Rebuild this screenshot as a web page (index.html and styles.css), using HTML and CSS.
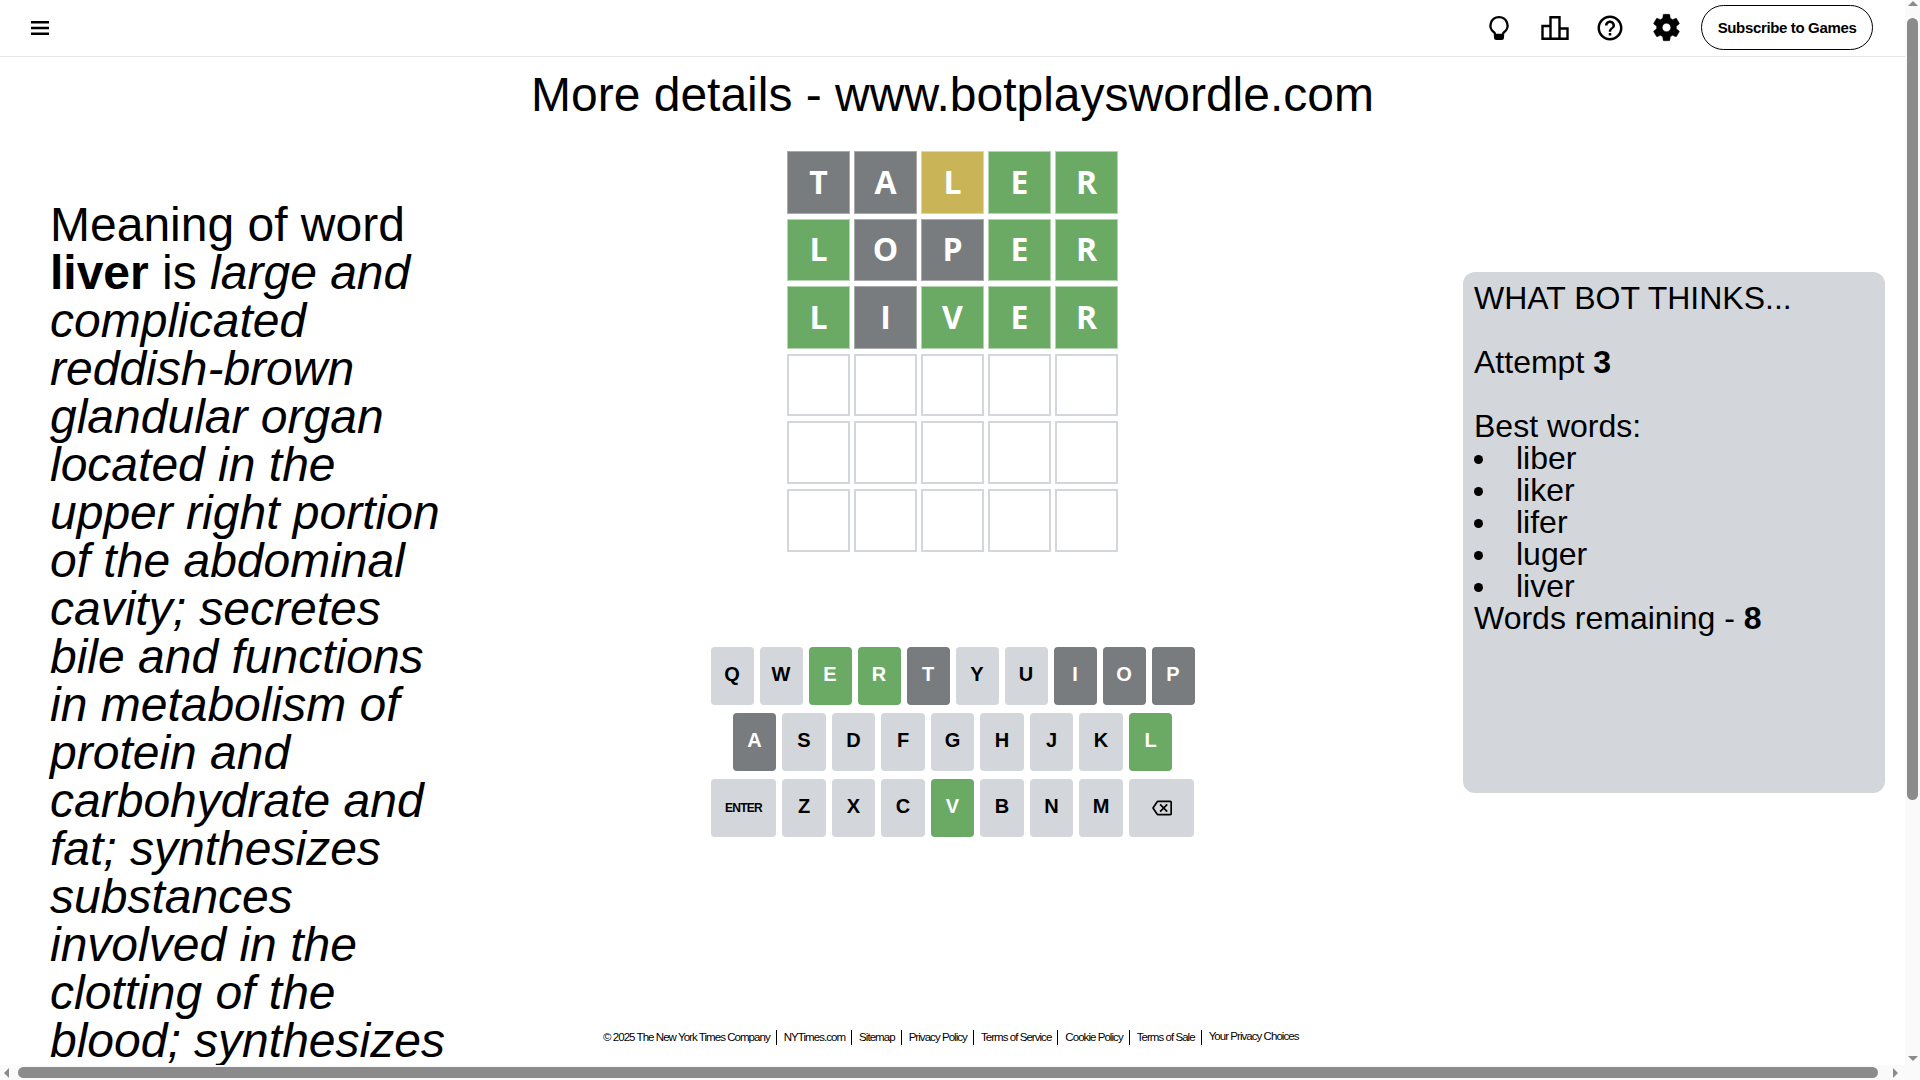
FILE: index.html
```html
<!DOCTYPE html>
<html lang="en">
<head>
<meta charset="utf-8">
<title>Wordle</title>
<link rel="stylesheet" href="styles.css">
</head>
<body>
<header class="topbar">
  <button class="icon-btn menu" aria-label="Menu">
    <svg width="24" height="24" viewBox="0 0 24 24"><path d="M3 5h18v2.600H3zM3 10.700h18v2.600H3zM3 16.400h18V19H3z"/></svg>
  </button>
  <div class="top-actions">
    <svg class="ic bulb" width="24" height="28" viewBox="0 0 24 28"><path d="M12 3.100a8.400 8.400 0 0 0-5 15.200c.7.500 1 1.200 1 2v.7h8v-.7c0-.8.300-1.500 1-2a8.400 8.400 0 0 0-5-15.200z" fill="none" stroke="#000" stroke-width="2.300"/><path d="M7 20h10v3.500a2.500 2.500 0 0 1-2.500 2.500h-5A2.500 2.500 0 0 1 7 23.500z"/></svg>
    <svg class="ic bars" width="28" height="24" viewBox="0 0 28 24"><path d="M1.500 22.800V10h8V1.300h9V12.500h8v10.300z M9.500 10v12.800 M18.500 12.500v10.300" fill="none" stroke="#000" stroke-width="2.400"/></svg>
    <svg class="ic help" width="30" height="30" viewBox="0 0 24 24"><path d="M11 18h2v-2h-2v2zm1-16C6.480 2 2 6.480 2 12s4.480 10 10 10 10-4.480 10-10S17.520 2 12 2zm0 18c-4.410 0-8-3.590-8-8s3.590-8 8-8 8 3.590 8 8-3.590 8-8 8zm0-14c-2.210 0-4 1.790-4 4h2c0-1.100.9-2 2-2s2 .9 2 2c0 2-3 1.750-3 5h2c0-2.250 3-2.500 3-5 0-2.210-1.790-4-4-4z"/></svg>
    <svg class="ic gear" width="33" height="33" viewBox="0 0 24 24"><path stroke="#000" stroke-width=".35" d="M19.140 12.940c.04-.3.06-.61.06-.94 0-.32-.02-.64-.07-.94l2.030-1.580c.18-.14.23-.41.12-.61l-1.920-3.320c-.12-.22-.37-.29-.59-.22l-2.390.96c-.5-.38-1.030-.7-1.620-.94L14.400 2.810c-.04-.24-.24-.41-.48-.41h-3.840c-.24 0-.43.17-.47.41L9.250 5.350c-.59.24-1.130.57-1.620.94l-2.390-.96c-.22-.08-.47 0-.59.22L2.740 8.870c-.12.21-.08.47.12.61l2.030 1.580c-.05.3-.09.63-.09.94s.02.64.07.94l-2.030 1.580c-.18.14-.23.41-.12.61l1.920 3.320c.12.22.37.29.59.22l2.390-.96c.5.38 1.030.7 1.620.94l.36 2.540c.05.24.24.41.48.41h3.840c.24 0 .44-.17.47-.41l.36-2.540c.59-.24 1.130-.56 1.620-.94l2.390.96c.22.08.47 0 .59-.22l1.920-3.320c.12-.22.07-.47-.12-.61l-2.010-1.580zM12 15.100a3.100 3.100 0 1 1 0-6.200 3.100 3.100 0 0 1 0 6.200z"/></svg>
    <button class="subscribe">Subscribe to Games</button>
  </div>
</header>
<h1 class="headline">More details - www.botplayswordle.com</h1>
<main class="stage">
  <section class="meaning">Meaning of word <b>liver</b> is <i>large and complicated reddish-brown glandular organ located in the upper right portion of the abdominal cavity; secretes bile and functions in metabolism of protein and carbohydrate and fat; synthesizes substances involved in the clotting of the blood; synthesizes</i></section>
  <section class="game">
    <div class="board">
      <div class="tile gray">T</div><div class="tile gray">A</div><div class="tile yellow">L</div><div class="tile green">E</div><div class="tile green">R</div>
      <div class="tile green">L</div><div class="tile gray">O</div><div class="tile gray">P</div><div class="tile green">E</div><div class="tile green">R</div>
      <div class="tile green">L</div><div class="tile gray">I</div><div class="tile green">V</div><div class="tile green">E</div><div class="tile green">R</div>
      <div class="tile"></div><div class="tile"></div><div class="tile"></div><div class="tile"></div><div class="tile"></div>
      <div class="tile"></div><div class="tile"></div><div class="tile"></div><div class="tile"></div><div class="tile"></div>
      <div class="tile"></div><div class="tile"></div><div class="tile"></div><div class="tile"></div><div class="tile"></div>
    </div>
    <div class="keyboard">
      <div class="row">
        <span class="key">Q</span><span class="key">W</span><span class="key green">E</span><span class="key green">R</span><span class="key gray">T</span><span class="key">Y</span><span class="key">U</span><span class="key gray">I</span><span class="key gray">O</span><span class="key gray">P</span>
      </div>
      <div class="row">
        <span class="key gray">A</span><span class="key">S</span><span class="key">D</span><span class="key">F</span><span class="key">G</span><span class="key">H</span><span class="key">J</span><span class="key">K</span><span class="key green">L</span>
      </div>
      <div class="row">
        <span class="key wide enter">ENTER</span><span class="key">Z</span><span class="key">X</span><span class="key">C</span><span class="key green">V</span><span class="key">B</span><span class="key">N</span><span class="key">M</span>
        <span class="key wide"><svg width="20" height="20" viewBox="0 0 24 24"><path d="M22 3H7c-.69 0-1.230.35-1.590.88L0 12l5.410 8.110c.36.53.9.89 1.590.89h15c1.100 0 2-.9 2-2V5c0-1.100-.9-2-2-2zm0 16H7.070L2.400 12l4.660-7H22v14zm-11.590-2L14 13.410 17.590 17 19 15.590 15.410 12 19 8.410 17.590 7 14 10.590 10.410 7 9 8.410 12.590 12 9 15.590z"/></svg></span>
      </div>
    </div>
  </section>
  <aside class="bot">
    <div>WHAT BOT THINKS...</div>
    <p>Attempt <b>3</b></p>
    <div>Best words:</div>
    <ul><li>liber</li><li>liker</li><li>lifer</li><li>luger</li><li>liver</li></ul>
    <div>Words remaining - <b>8</b></div>
  </aside>
</main>
<footer class="legal">
  <span>© 2025 The New York Times Company</span><span>NYTimes.com</span><span>Sitemap</span><span>Privacy Policy</span><span>Terms of Service</span><span>Cookie Policy</span><span>Terms of Sale</span><span class="choices">Your Privacy Choices</span>
</footer>
<div class="vbar"><i class="arrow up"></i><i class="vthumb"></i><i class="arrow down"></i></div>
<div class="hbar"><i class="arrow left"></i><i class="hthumb"></i><i class="arrow right"></i></div>
</body>
</html>
```
FILE: styles.css
```css
* { box-sizing: border-box; }
html, body { margin: 0; height: 100%; overflow: hidden; background: #fff; color: #000; }
body { font-family: "Liberation Sans", Arial, sans-serif; width: 1920px; height: 1080px; position: relative; }
.topbar { height: 57px; width: 1905px; border-bottom: 1px solid #e6e6e6; display: flex; justify-content: space-between; align-items: center; padding: 0 32px 1px 28px; }
.icon-btn { border: 0; background: none; padding: 0; width: 24px; height: 24px; }
.top-actions { display: flex; align-items: center; }
.ic { display: block; flex: none; }
.bars { margin-left: 30px; }
.help { margin-left: 26px; }
.gear { margin-left: 25px; }
.subscribe { margin-left: 18px; width: 172px; height: 45px; border: 1px solid #000; border-radius: 23px; background: #fff; font: bold 15px "Liberation Sans", sans-serif; letter-spacing: -.35px; padding: 0; color: #000; }
.headline { margin: 0; width: 1905px; text-align: center; font-size: 48px; font-weight: 400; line-height: 56px; padding-top: 10px; }
.stage { display: grid; grid-template-columns: 400px 1005px 422px; padding-left: 50px; align-items: start; }
.meaning { margin-top: 78px; font-size: 48px; line-height: 48px; }
.game { display: flex; flex-direction: column; align-items: center; padding-top: 28px; }
.board { display: grid; grid-template-columns: repeat(5, 63px); grid-auto-rows: 62.600px; column-gap: 4px; row-gap: 5px; }
.tile { border: 2px solid #d3d6da; display: flex; align-items: center; justify-content: center; padding-bottom: 2px; font: bold 32px "Open Sans", sans-serif; color: #fff; }
.tile.gray, .key.gray { background: #787c7e; color: #fff; }
.tile.green, .key.green { background: #6aaa64; color: #fff; }
.tile.yellow { background: #c9b458; }
.tile.gray { border: 1px solid #a8aaab; }
.tile.green { border: 1px solid #b5d5b1; }
.tile.yellow { border: 1px solid #e0d5a6; }
.keyboard { margin-top: 95px; width: 484px; display: flex; flex-direction: column; gap: 8px; }
.row { display: flex; justify-content: center; gap: 6px; }
.key { width: 43.500px; height: 58px; padding-bottom: 2px; border-radius: 4px; background: #d3d6da; display: flex; align-items: center; justify-content: center; font: bold 20px "Liberation Sans", sans-serif; color: #000; }
.key.wide { width: 65.500px; padding-bottom: 0; }
.key.enter { font-size: 12px; letter-spacing: -.7px; }
.bot { margin: 149px 0 0 8px; width: 422px; background: #d3d6da; border-radius: 12px; height: 521px; padding: 10px 11px; font-size: 32px; line-height: 32px; }
.bot p { margin: 32px 0; }
.bot ul { margin: 0; padding: 0; list-style: none; }
.bot li::before { content: ""; display: inline-block; width: 9px; height: 9px; border-radius: 50%; background: #000; margin-right: 33px; vertical-align: 5px; }
.legal { position: absolute; left: 603px; top: 1030px; display: flex; font-size: 11.500px; letter-spacing: -.95px; line-height: 15px; white-space: nowrap; }
.legal span { padding: 0 6px 0 7px; border-right: 1px solid #000; }
.legal span:first-child { padding-left: 0; }
.legal span:last-child { border: 0; }
.choices { position: relative; top: -1px; }
.vbar { position: absolute; right: 0; top: 0; width: 15px; height: 1080px; background: #fafafa; }
.hbar { position: absolute; left: 0; bottom: 0; width: 1905px; height: 15px; background: #fafafa; }
.vthumb { position: absolute; left: 2px; top: 18px; width: 11px; height: 782px; background: #8b8b8b; border-radius: 6px; }
.hthumb { position: absolute; left: 18px; top: 2px; width: 1860px; height: 11px; background: #8b8b8b; border-radius: 6px; }
.arrow { position: absolute; width: 0; height: 0; border: 5px solid transparent; }
.arrow.up { left: 2.500px; top: 1px; border-bottom-color: #8b8b8b; border-top: 0; }
.arrow.down { left: 2.500px; bottom: 19px; border-top-color: #8b8b8b; border-bottom: 0; }
.arrow.left { left: 4px; top: 3px; border-right-color: #8b8b8b; border-left: 0; }
.arrow.right { left: 1893px; top: 3px; border-left-color: #8b8b8b; border-right: 0; }
```
